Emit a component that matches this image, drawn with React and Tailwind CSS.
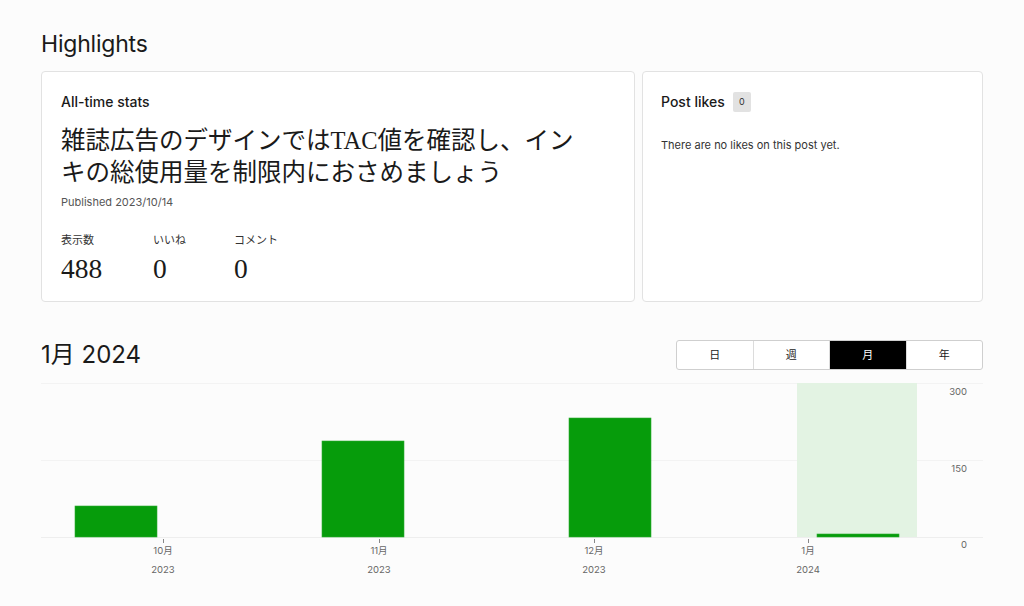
import React from 'react';

const bars = [
  { x: 34, h: 31 },
  { x: 281, h: 96 },
  { x: 528, h: 119 },
  { x: 776, h: 3 },
];

const ticks = [
  { x: 122, m: '10月', y: '2023' },
  { x: 338, m: '11月', y: '2023' },
  { x: 553, m: '12月', y: '2023' },
  { x: 767, m: '1月', y: '2024' },
];

function Chart() {
  return (
    <svg width="942" height="200" className="block" style={{ fontFamily: 'Inter, "Noto Sans CJK JP", sans-serif' }}>
      {/* gridlines */}
      <line x1="0" x2="942" y1="0.5" y2="0.5" stroke="#f3f3f3" />
      <line x1="0" x2="942" y1="77.5" y2="77.5" stroke="#f3f3f3" />
      <line x1="0" x2="942" y1="154.5" y2="154.5" stroke="#eeeeee" />
      {/* current period */}
      <rect x="756" y="0" width="120" height="154" fill="#e3f3e3" />
      {bars.map((b, i) => (
        <rect key={i} x={b.x} y={154 - b.h} width="82" height={b.h} fill="#069c0b" stroke="#2eac33" strokeWidth="0.6" />
      ))}
      {ticks.map((t) => (
        <g key={t.m}>
          <line x1={t.x + 0.5} x2={t.x + 0.5} y1="156" y2="160" stroke="#888" />
          <text x={t.x} y="171" textAnchor="middle" fontSize="9.5" fill="#666">{t.m}</text>
          <text x={t.x} y="190" textAnchor="middle" fontSize="9.5" fill="#666">{t.y}</text>
        </g>
      ))}
      <text x="926" y="12" textAnchor="end" fontSize="9.5" fill="#666">300</text>
      <text x="926" y="89" textAnchor="end" fontSize="9.5" fill="#666">150</text>
      <text x="926" y="165" textAnchor="end" fontSize="9.5" fill="#666">0</text>
    </svg>
  );
}

export default function App() {
  const tabs = ['日', '週', '月', '年'];
  return (
    <div className="w-[1024px] h-[606px] bg-[#fcfcfc] px-[41px] pt-[30px] overflow-hidden text-[#1a1a1a]" style={{ fontFamily: 'Inter, "Noto Sans CJK JP", sans-serif' }}>
      <h1 className="text-[23px] leading-[28px] tracking-[-0.2px]">Highlights</h1>

      <div className="grid grid-cols-[594px_1fr] gap-[7px] mt-[13px]">
        {/* All-time stats */}
        <div className="h-[231px] bg-white border border-[#e2e2e2] rounded-[4px] px-[19px] pt-[20px]">
          <div className="text-[14px] leading-[20px] font-medium">All-time stats</div>
          <div className="mt-[13px] max-w-[520px] text-[24.5px] leading-[32px] text-[#1a1a1a]" style={{ fontFamily: '"Liberation Serif", "Noto Sans CJK JP", serif' }}>
            雑誌広告のデザインではTAC値を確認し、インキの総使用量を制限内におさめましょう
          </div>
          <div className="mt-[5px] text-[11px] leading-[16px] text-[#555]">Published 2023/10/14</div>
          <div className="flex mt-[22px]">
            <div className="w-[92px]">
              <div className="text-[11px] leading-[16px] text-[#333]">表示数</div>
              <div className="mt-[5px] text-[27.5px] leading-[32px]" style={{ fontFamily: '"Liberation Serif", serif' }}>488</div>
            </div>
            <div className="w-[81px]">
              <div className="text-[11px] leading-[16px] text-[#333]">いいね</div>
              <div className="mt-[5px] text-[27.5px] leading-[32px]" style={{ fontFamily: '"Liberation Serif", serif' }}>0</div>
            </div>
            <div>
              <div className="text-[11px] leading-[16px] text-[#333]">コメント</div>
              <div className="mt-[5px] text-[27.5px] leading-[32px]" style={{ fontFamily: '"Liberation Serif", serif' }}>0</div>
            </div>
          </div>
        </div>

        {/* Post likes */}
        <div className="h-[231px] bg-white border border-[#e2e2e2] rounded-[4px] px-[18px] pt-[19px]">
          <div className="flex items-center gap-[8px] h-[22px]">
            <span className="text-[14px] leading-[20px] font-medium">Post likes</span>
            <span className="w-[18px] h-[20px] bg-[#e2e2e2] rounded-[2px] flex items-center justify-center text-[9px] text-[#333]">0</span>
          </div>
          <div className="mt-[24px] text-[11px] leading-[16px] text-[#333]">There are no likes on this post yet.</div>
        </div>
      </div>

      <div className="flex items-center justify-between mt-[38px] h-[30px]">
        <h2 className="text-[24px] leading-[28px]">1月 2024</h2>
        <div className="flex h-[30px] w-[307px] border border-[#cfcfcf] rounded-[3px] overflow-hidden bg-white">
          {tabs.map((t, i) => (
            <div
              key={t}
              className={`flex-1 flex items-center justify-center text-[11px] ${i > 0 ? 'border-l border-[#dcdcdc]' : ''} ${t === '月' ? 'bg-black text-white' : 'text-[#222]'}`}
            >
              {t}
            </div>
          ))}
        </div>
      </div>

      <div className="mt-[13px]">
        <Chart />
      </div>
    </div>
  );
}
